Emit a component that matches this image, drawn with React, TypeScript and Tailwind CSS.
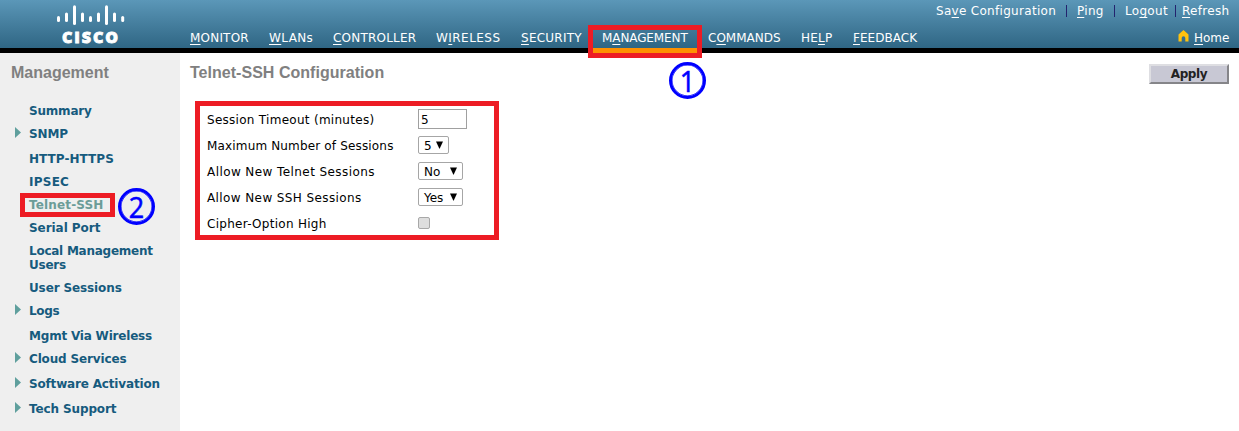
import type { ReactNode } from "react";

type NavItem = { pre?: string; key: string; post: string; width: string; track: string; active?: boolean };

const nav: NavItem[] = [
  { key: "M", post: "ONITOR", width: "w-[79px]", track: "tracking-[0.2px]" },
  { key: "W", post: "LANs", width: "w-[64px]", track: "tracking-[0.4px]" },
  { key: "C", post: "ONTROLLER", width: "w-[103px]", track: "tracking-[0.2px]" },
  { pre: "W", key: "I", post: "RELESS", width: "w-[85px]", track: "tracking-[0.45px]" },
  { key: "S", post: "ECURITY", width: "w-[81px]", track: "tracking-[0.25px]" },
  { pre: "M", key: "A", post: "NAGEMENT", width: "w-[106px]", track: "tracking-[-0.1px]", active: true },
  { pre: "C", key: "O", post: "MMANDS", width: "w-[93px]", track: "tracking-[0px]" },
  { pre: "HE", key: "L", post: "P", width: "w-[52px]", track: "tracking-[0.2px]" },
  { key: "F", post: "EEDBACK", width: "w-[70px]", track: "tracking-[0.05px]" },
];

type SideItem = { label: string; height: string; track: string; arrow?: boolean; current?: boolean };

const side: SideItem[] = [
  { label: "Summary", height: "h-[23px]", track: "tracking-[-0.2px]" },
  { label: "SNMP", height: "h-[25px]", track: "tracking-[-0.15px]", arrow: true },
  { label: "HTTP-HTTPS", height: "h-[23px]", track: "tracking-[0.05px]" },
  { label: "IPSEC", height: "h-[23px]", track: "tracking-[0.25px]" },
  { label: "Telnet-SSH", height: "h-[23px]", track: "tracking-[0.15px]", current: true },
  { label: "Serial Port", height: "h-[23px]", track: "tracking-[-0.05px]" },
  { label: "Local Management Users", height: "h-[37px]", track: "tracking-[-0.25px]" },
  { label: "User Sessions", height: "h-[23px]", track: "tracking-[-0.12px]" },
  { label: "Logs", height: "h-[25px]", track: "tracking-[-0.3px]", arrow: true },
  { label: "Mgmt Via Wireless", height: "h-[23px]", track: "tracking-[-0.2px]" },
  { label: "Cloud Services", height: "h-[25px]", track: "tracking-[-0.15px]", arrow: true },
  { label: "Software Activation", height: "h-[25px]", track: "tracking-[-0.17px]", arrow: true },
  { label: "Tech Support", height: "h-[23px]", track: "tracking-[-0.12px]", arrow: true },
];

const U = ({ children }: { children: ReactNode }) => (
  <span className="underline decoration-1 underline-offset-2 [text-decoration-skip-ink:none]">{children}</span>
);

function Logo() {
  const bars = [
    [58.5, 16, 22], [66.5, 12.5, 22], [74.5, 5.3, 25], [82.5, 12.5, 22], [90.5, 16, 22],
    [98.5, 12.5, 22], [106.5, 5.3, 25], [114.5, 12.5, 22], [122.7, 16, 22],
  ];
  return (
    <div className="w-[190px] shrink-0">
      <svg width="190" height="28" className="block">
        {bars.map(([x, a, b]) => (
          <rect key={x} x={x - 1.5} y={a} width="3" height={b - a} rx="1.5" fill="#fff" />
        ))}
      </svg>
      <div className="pl-[62px] font-['Open_Sans'] text-[16px] leading-[18px] font-extrabold tracking-[1.9px] text-white [-webkit-text-stroke:0.8px_#fff]">CISCO</div>
    </div>
  );
}

function Select({ value, width }: { value: string; width: string }) {
  return (
    <div className={`${width} flex h-[18px] items-center justify-between rounded-[2px] border border-[#a6a6a6] bg-white pr-[5px] pl-[5px]`}>
      <span className="pt-[2px]">{value}</span>
      <svg width="7" height="8" viewBox="0 0 7 8"><path d="M0 0.5h7L3.5 8z" fill="#000" /></svg>
    </div>
  );
}

function Row({ label, track, children }: { label: string; track: string; children: ReactNode }) {
  return (
    <div className="flex h-[26px] items-center">
      <div className={`w-[211px] pt-[2px] ${track}`}>{label}</div>
      {children}
    </div>
  );
}

function Callout({ n, place }: { n: string; place: string }) {
  return (
    <div className={`absolute ${place} flex h-[37px] w-[37px] items-center justify-center rounded-full border-[3px] border-[#0000ff] font-['Open_Sans'] text-[30px] leading-none text-[#0000ff] shadow-[inset_0_0_0_0.5px_#0000ff]`}>
      <span className="inline-block scale-x-90 [-webkit-text-stroke:0.6px_#0000ff]">{n}</span>
    </div>
  );
}

const Divider = () => <span className="mt-[2px] h-3 w-px bg-[#23236e]" />;

export default function App() {
  return (
    <div className="relative flex h-[431px] w-[1239px] flex-col overflow-hidden bg-white font-['DejaVu_Sans',sans-serif] text-[12px] whitespace-nowrap text-black">
      <header className="flex h-[53px] shrink-0 border-b-[5px] border-black bg-linear-to-b from-[#5b97b8] to-[#2f6684] text-white">
        <Logo />
        <nav className="flex flex-1 pt-[30px] leading-4">
          {nav.map((n) => (
            <div key={n.post} className={`${n.width} ${n.track} relative`}>
              {n.pre}<U>{n.key}</U>{n.post}
              {n.active && <span className="absolute top-[18px] -left-[9px] h-[5px] w-[104px] bg-[#ff9000]" />}
            </div>
          ))}
        </nav>
        <div className="flex w-[303px] flex-col pt-[3px] leading-4 tracking-[0.3px]">
          <div className="flex">
            <div className="w-[130px]">Sa<U>v</U>e Configuration</div>
            <Divider />
            <div className="w-[47px] pl-[10px]"><U>P</U>ing</div>
            <Divider />
            <div className="w-[60px] pl-[10px]">Lo<U>g</U>out</div>
            <Divider />
            <div className="pl-[6px]"><U>R</U>efresh</div>
          </div>
          <div className="mt-[11px] flex pl-[242px] tracking-[0px]">
            <svg width="11" height="12" viewBox="0 0 11 12" className="mr-[5px]"><path d="M5.5 0L10.5 4.5V11.5H7.3V8a1.8 1.8 0 0 0-3.6 0V11.5H0.5V4.5z" fill="#ffc20e" /></svg>
            <span><U>H</U>ome</span>
          </div>
        </div>
      </header>
      <div className="flex flex-1">
        <aside className="w-[180px] bg-[#efefef]">
          <h1 className="pt-[10px] pl-[11px] font-['Liberation_Sans'] text-[16px] leading-5 font-bold text-[#808080]">Management</h1>
          <ul className="pt-[21px] font-bold text-[#165b7e]">
            {side.map((s) => (
              <li key={s.label} className={`${s.height} ${s.track} flex`}>
                <span className="w-[29px] shrink-0 pl-[15px]">
                  {s.arrow && <svg width="6" height="11" viewBox="0 0 6 11"><path d="M0 0l6 5.5L0 11z" fill="#5f9f9d" /></svg>}
                </span>
                <span className={`w-[140px] leading-[14px] whitespace-normal ${s.current ? "text-[#6b9c98]" : ""}`}>{s.label}</span>
              </li>
            ))}
          </ul>
        </aside>
        <main className="flex-1">
          <div className="flex justify-between pt-[10px] pr-[10px] pl-[10px]">
            <h2 className="font-['Liberation_Sans'] text-[16px] leading-5 font-bold tracking-[0.03px] text-[#808080]">Telnet-SSH Configuration</h2>
            <button className="mt-[1px] h-5 w-20 border-2 border-t-[#dedee2] border-r-[#858589] border-b-[#858589] border-l-[#dedee2] bg-[#c8c8d4] pt-px leading-[15px] font-bold tracking-[-0.4px] text-[#222]">Apply</button>
          </div>
          <section className="mt-[17px] ml-[15px] h-[139px] w-[304px] border-[5px] border-[#ed1c24] pl-[7px]">
            <Row label="Session Timeout (minutes)" track="tracking-[0.28px]">
              <div className="flex h-5 w-[49px] items-center border border-[#a0a0a0] pt-px pl-[2px]">5</div>
            </Row>
            <Row label="Maximum Number of Sessions" track="tracking-[0.16px]"><Select value="5" width="w-[31px]" /></Row>
            <Row label="Allow New Telnet Sessions" track="tracking-[0.42px]"><Select value="No" width="w-[45px]" /></Row>
            <Row label="Allow New SSH Sessions" track="tracking-[0.4px]"><Select value="Yes" width="w-[45px]" /></Row>
            <Row label="Cipher-Option High" track="tracking-[0.28px]">
              <span className="h-3 w-3 rounded-[2px] border border-[#a8a8a8] bg-[#dedede]" />
            </Row>
          </section>
        </main>
      </div>
      <div className="absolute top-[25px] left-[588px] h-[33px] w-[114px] border-[5px] border-[#ed1c24]" />
      <div className="absolute top-[193px] left-[20px] h-[24px] w-[95px] border-[5px] border-[#ed1c24]" />
      <Callout n="1" place="top-[62px] left-[669px]" />
      <Callout n="2" place="top-[188px] left-[118px]" />
    </div>
  );
}
